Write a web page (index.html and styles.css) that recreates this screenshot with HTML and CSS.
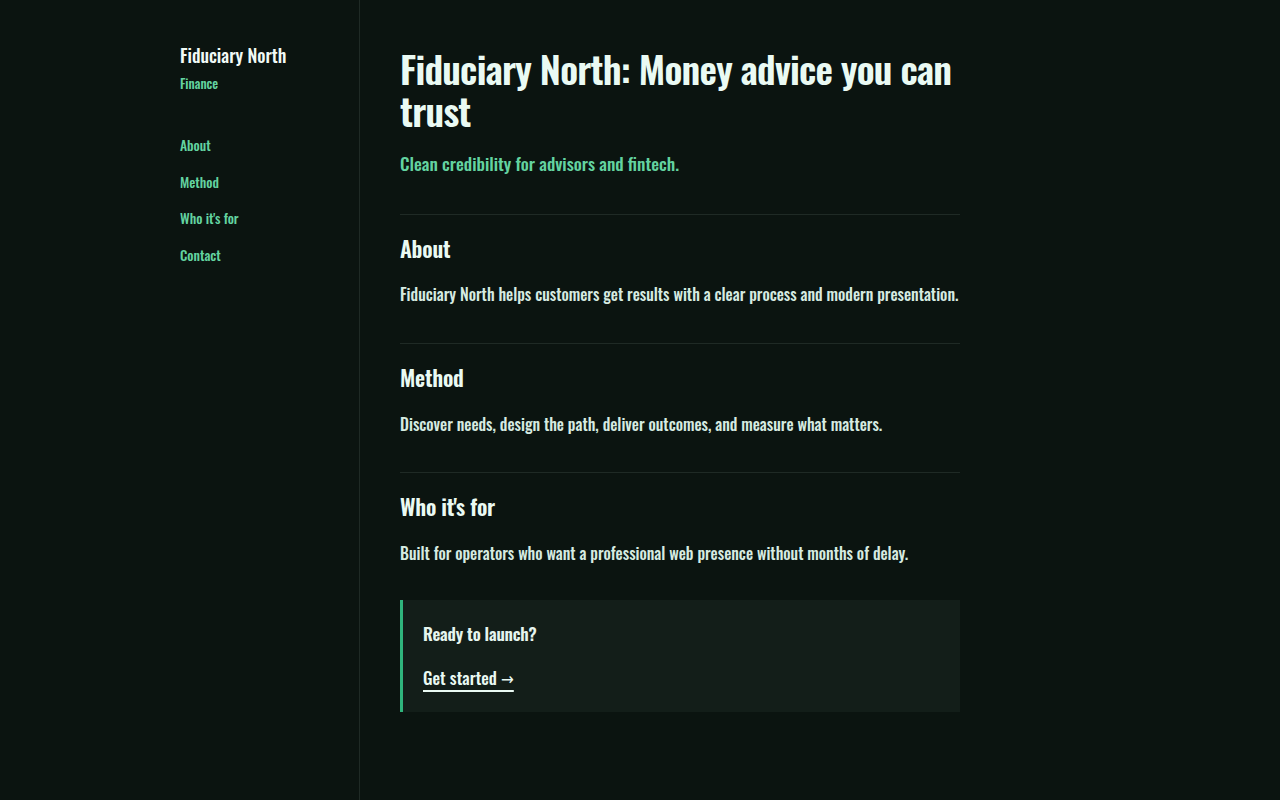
FILE: index.html
```html
<!DOCTYPE html>
<html lang="en">

<head>
    <meta charset="UTF-8">
    <title>Fiduciary North</title>
    <link rel="stylesheet" href="styles.css">
</head>

<body>
    <div class="layout">
        <aside class="sidebar">
            <div class="brand">Fiduciary North</div>
            <div class="brand_tag">Finance</div>
            <nav class="side_nav">
                <a href="#about">About</a>
                <a href="#method">Method</a>
                <a href="#who">Who it's for</a>
                <a href="#contact">Contact</a>
            </nav>
        </aside>
        <main class="content">
            <h1>Fiduciary North: Money advice you can trust</h1>
            <p class="lead">Clean credibility for advisors and fintech.</p>

            <section class="block" id="about">
                <h2>About</h2>
                <p>Fiduciary North helps customers get results with a clear process and modern presentation.</p>
            </section>
            <section class="block" id="method">
                <h2>Method</h2>
                <p>Discover needs, design the path, deliver outcomes, and measure what matters.</p>
            </section>
            <section class="block" id="who">
                <h2>Who it's for</h2>
                <p>Built for operators who want a professional web presence without months of delay.</p>
            </section>

            <div class="cta" id="contact">
                <p class="cta_title">Ready to launch?</p>
                <a class="cta_link" href="#">Get started →</a>
            </div>
        </main>
    </div>
</body>

</html>
```

FILE: styles.css
```css
body {
    margin: 0;
    background: #0b1410;
    color: #e6f5ee;
    font-family: "Oswald", "DejaVu Sans Condensed", "Liberation Sans Narrow", sans-serif;
    font-weight: 500;
}

.layout {
    display: flex;
    min-height: 800px;
}

/* left column */
.sidebar {
    width: 179px;
    padding: 42px 0 0 180px;
    border-right: 1px solid #1f2a25;
}

.brand {
    font-size: 18px;
    color: #f1faf6;
}

.brand_tag {
    margin-top: 5px;
    font-size: 13px;
    color: #63d3a0;
}

.side_nav {
    display: flex;
    flex-direction: column;
    gap: 16.5px;
    margin-top: 42px;
}

.side_nav a {
    font-size: 13.6px;
    color: #63d3a0;
    text-decoration: none;
}

/* main column */
.content {
    width: 560px;
    padding: 48px 40px;
}

h1 {
    margin: 0;
    font-size: 38px;
    line-height: 1.1;
    font-weight: 600;
    letter-spacing: -0.02em;
    color: #eafaf3;
}

.lead {
    margin: 18px 0 38px;
    font-size: 17.6px;
    color: #63d3a0;
}

.block {
    border-top: 1px solid #1f2a25;
    padding: 17px 0 36.7px;
}

section.block:last-of-type {
    padding-bottom: 34.5px;
}

.block h2 {
    margin: 0 0 18.7px;
    font-size: 22px;
    font-weight: 600;
    letter-spacing: -0.01em;
    color: #eafaf3;
}

.block p {
    margin: 0;
    font-size: 16px;
    color: #d6ebe1;
}

.cta {
    background: #131e19;
    border-left: 3px solid #2fb47c;
    padding: 21px 20px 22px;
}

.cta_title {
    margin: 0 0 19px;
    font-size: 17px;
    font-weight: 600;
    letter-spacing: -0.01em;
}

.cta_link {
    font-size: 17px;
    color: #eafaf3;
    text-decoration: underline;
    text-decoration-thickness: 1.5px;
    text-underline-offset: 5px;
}
```
